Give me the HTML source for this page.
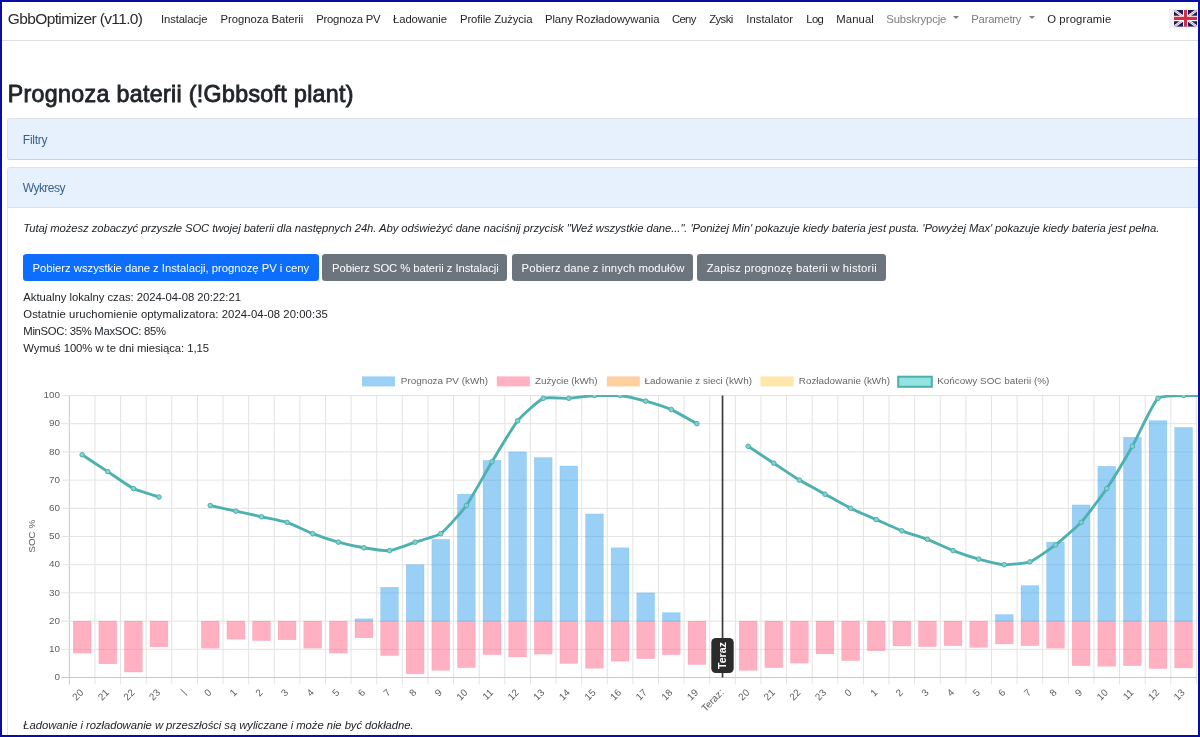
<!DOCTYPE html>
<html lang="pl"><head><meta charset="utf-8"><title>GbbOptimizer - Prognoza baterii</title>
<style>
html,body{margin:0;padding:0;background:#fff}
body{width:1200px;height:737px;position:relative;overflow:hidden;font-family:"Liberation Sans",sans-serif;color:#212529}
#page{position:absolute;left:0;top:0;width:1200px;height:737px;overflow:hidden;will-change:transform;filter:blur(0.3px)}
.t{position:absolute;white-space:nowrap;display:block;margin:0;padding:0;font-weight:400;text-decoration:none}
button{border:0;padding:0;margin:0;font:inherit;text-align:left;cursor:pointer;overflow:visible}
.abs{position:absolute}
#navbar{left:0;top:0;width:1200px;height:40px;background:#fff;border-bottom:1px solid #dedede}
#flagbg{left:1169px;top:9px;width:31px;height:19px;background:#f1f1f1}
.card-h{background:#e7f1fd;border:1px solid #dde2e8;box-sizing:border-box}
#filtry{left:7px;top:118px;width:1200px;height:42px;border-radius:3px;border-bottom-color:#cdd2d8}
#wykresy-h{left:7px;top:166.5px;width:1200px;height:41.5px;border-radius:3px 3px 0 0}
#wykresy-b{left:7px;top:207px;width:1200px;height:600px;border-left:1px solid #e4e7eb;box-sizing:border-box}
.btn{position:absolute;top:254px;height:27.2px;border-radius:3.3px;box-sizing:border-box}
.btn-p{background:#0d6efd}
.btn-s{background:#6c757d}
.caret{position:absolute;width:0;height:0;border-left:3.2px solid transparent;border-right:3.2px solid transparent;border-top:3.4px solid #7d7d7d}
#frame{left:0;top:0;width:1200px;height:737px;box-sizing:border-box;border:2px solid #0b0ba6;border-bottom-width:2px;pointer-events:none;z-index:10}
svg{position:absolute;left:0;top:0}
</style></head>
<body>
<div id="page">
<nav class="navbar">
<div class="abs" id="navbar"></div>
<a class="t navbar-brand" id="t0" href="#" style="left:7.80px;top:9px;font-size:15.50px;line-height:19px;color:#2a2a2a;letter-spacing:-0.622px;">GbbOptimizer (v11.0)</a>
<a class="t nav-link" id="t1" href="#" style="left:161.00px;top:12px;font-size:11.30px;line-height:14px;color:#252525;letter-spacing:-0.137px;">Instalacje</a>
<a class="t nav-link" id="t2" href="#" style="left:220.50px;top:12px;font-size:11.30px;line-height:14px;color:#252525;letter-spacing:-0.049px;">Prognoza Baterii</a>
<a class="t nav-link" id="t3" href="#" style="left:316.20px;top:12px;font-size:11.30px;line-height:14px;color:#252525;letter-spacing:-0.228px;">Prognoza PV</a>
<a class="t nav-link" id="t4" href="#" style="left:393.00px;top:12px;font-size:11.30px;line-height:14px;color:#252525;letter-spacing:-0.082px;">Ładowanie</a>
<a class="t nav-link" id="t5" href="#" style="left:460.00px;top:12px;font-size:11.30px;line-height:14px;color:#252525;letter-spacing:-0.114px;">Profile Zużycia</a>
<a class="t nav-link" id="t6" href="#" style="left:545.00px;top:12px;font-size:11.30px;line-height:14px;color:#252525;letter-spacing:-0.088px;">Plany Rozładowywania</a>
<a class="t nav-link" id="t7" href="#" style="left:672.00px;top:12px;font-size:11.30px;line-height:14px;color:#252525;letter-spacing:-0.692px;">Ceny</a>
<a class="t nav-link" id="t8" href="#" style="left:709.20px;top:12px;font-size:11.30px;line-height:14px;color:#252525;letter-spacing:-0.565px;">Zyski</a>
<a class="t nav-link" id="t9" href="#" style="left:746.30px;top:12px;font-size:11.30px;line-height:14px;color:#252525;letter-spacing:0.026px;">Instalator</a>
<a class="t nav-link" id="t10" href="#" style="left:806.30px;top:12px;font-size:11.30px;line-height:14px;color:#252525;letter-spacing:-0.680px;">Log</a>
<a class="t nav-link" id="t11" href="#" style="left:836.30px;top:12px;font-size:11.30px;line-height:14px;color:#252525;letter-spacing:0.087px;">Manual</a>
<a class="t nav-link dropdown-toggle" id="t12" href="#" style="left:886.30px;top:12px;font-size:11.30px;line-height:14px;color:#7d7d7d;letter-spacing:-0.155px;">Subskrypcje</a>
<a class="t nav-link dropdown-toggle" id="t13" href="#" style="left:971.30px;top:12px;font-size:11.30px;line-height:14px;color:#7d7d7d;letter-spacing:-0.239px;">Parametry</a>
<a class="t nav-link" id="t14" href="#" style="left:1047.20px;top:12px;font-size:11.30px;line-height:14px;color:#252525;letter-spacing:0.130px;">O programie</a>
<div class="caret" style="left:953.2px;top:15.9px"></div>
<div class="caret" style="left:1028.7px;top:15.9px"></div>
<div class="abs" id="flagbg"></div>
<svg class="abs" role="img" aria-label="English" style="left:1174.2px;top:10.4px" width="23" height="16.8" viewBox="0 0 60 40" preserveAspectRatio="none">
<clipPath id="fc"><rect width="60" height="40" rx="5"/></clipPath>
<g clip-path="url(#fc)">
<rect width="60" height="40" fill="#1a1a5e"/>
<path d="M0,0 L60,40 M60,0 L0,40" stroke="#fff" stroke-width="6"/>
<path d="M0,0 L60,40 M60,0 L0,40" stroke="#d23a4e" stroke-width="1.6"/>
<path d="M30,0 V40 M0,20 H60" stroke="#fff" stroke-width="13"/>
<path d="M30,0 V40 M0,20 H60" stroke="#d12f45" stroke-width="8"/>
</g></svg>
</nav>
<main>
<h3 class="t" id="t15" style="left:7.70px;top:80px;font-size:23.20px;line-height:28px;color:#212529;letter-spacing:0.337px;-webkit-text-stroke:0.85px #212529;">Prognoza baterii (!Gbbsoft plant)</h3>
<section class="card">
<div class="abs card-h" id="filtry"></div>
<span class="t card-title" id="t16" style="left:22.80px;top:132px;font-size:12.00px;line-height:16px;color:#36608f;letter-spacing:-0.240px;">Filtry</span>
</section>
<section class="card">
<div class="abs card-h" id="wykresy-h"></div>
<span class="t card-title" id="t17" style="left:22.80px;top:180px;font-size:12.00px;line-height:16px;color:#36608f;letter-spacing:-0.548px;">Wykresy</span>
<div class="abs" id="wykresy-b"></div>
<p class="t" id="t18" style="left:23.30px;top:221px;font-size:11.30px;line-height:14px;color:#212529;font-style:italic;letter-spacing:-0.085px;">Tutaj możesz zobaczyć przyszłe SOC twojej baterii dla następnych 24h. Aby odświeżyć dane naciśnij przycisk "Weź wszystkie dane...". 'Poniżej Min' pokazuje kiedy bateria jest pusta. 'Powyżej Max' pokazuje kiedy bateria jest pełna.</p>
<div class="btn-row">
<button type="button" class="btn btn-p" style="left:23.1px;width:295.6px"><span class="t" id="t19" style="left:9.50px;top:7px;font-size:11.30px;line-height:14px;color:#fff;letter-spacing:-0.029px;">Pobierz wszystkie dane z Instalacji, prognozę PV i ceny</span></button>
<button type="button" class="btn btn-s" style="left:322.4px;width:185px"><span class="t" id="t20" style="left:9.60px;top:7px;font-size:11.30px;line-height:14px;color:#fff;letter-spacing:-0.064px;">Pobierz SOC % baterii z Instalacji</span></button>
<button type="button" class="btn btn-s" style="left:511.6px;width:181.7px"><span class="t" id="t21" style="left:10.00px;top:7px;font-size:11.30px;line-height:14px;color:#fff;letter-spacing:0.114px;">Pobierz dane z innych modułów</span></button>
<button type="button" class="btn btn-s" style="left:697.3px;width:188.7px"><span class="t" id="t22" style="left:9.40px;top:7px;font-size:11.30px;line-height:14px;color:#fff;letter-spacing:0.166px;">Zapisz prognozę baterii w historii</span></button>
</div>
<div class="info">
<div class="t" id="t23" style="left:23.30px;top:290px;font-size:11.30px;line-height:14px;color:#212529;letter-spacing:-0.036px;">Aktualny lokalny czas: 2024-04-08 20:22:21</div>
<div class="t" id="t24" style="left:23.30px;top:307px;font-size:11.30px;line-height:14px;color:#212529;letter-spacing:0.066px;">Ostatnie uruchomienie optymalizatora: 2024-04-08 20:00:35</div>
<div class="t" id="t25" style="left:23.30px;top:324px;font-size:11.30px;line-height:14px;color:#212529;letter-spacing:-0.306px;">MinSOC: 35% MaxSOC: 85%</div>
<div class="t" id="t26" style="left:23.30px;top:341px;font-size:11.30px;line-height:14px;color:#212529;letter-spacing:-0.056px;">Wymuś 100% w te dni miesiąca: 1,15</div>
</div>
<div class="chart">
<span class="t legend-label" id="t28" style="left:400.80px;top:374px;font-size:9.90px;line-height:13px;color:#666;letter-spacing:-0.004px;">Prognoza PV (kWh)</span>
<span class="t legend-label" id="t29" style="left:535.00px;top:374px;font-size:9.90px;line-height:13px;color:#666;letter-spacing:-0.049px;">Zużycie (kWh)</span>
<span class="t legend-label" id="t30" style="left:644.60px;top:374px;font-size:9.90px;line-height:13px;color:#666;letter-spacing:0.017px;">Ładowanie z sieci (kWh)</span>
<span class="t legend-label" id="t31" style="left:798.80px;top:374px;font-size:9.90px;line-height:13px;color:#666;letter-spacing:0.005px;">Rozładowanie (kWh)</span>
<span class="t legend-label" id="t32" style="left:937.20px;top:374px;font-size:9.90px;line-height:13px;color:#666;letter-spacing:0.007px;">Końcowy SOC baterii (%)</span>
<svg width="1200" height="737" viewBox="0 0 1200 737">
<line x1="69.35" y1="395.50" x2="69.35" y2="684.50" stroke="#c9c9c9" stroke-width="1"/>
<line x1="94.96" y1="395.50" x2="94.96" y2="684.50" stroke="#e3e3e3" stroke-width="1"/>
<line x1="120.58" y1="395.50" x2="120.58" y2="684.50" stroke="#e3e3e3" stroke-width="1"/>
<line x1="146.19" y1="395.50" x2="146.19" y2="684.50" stroke="#e3e3e3" stroke-width="1"/>
<line x1="171.81" y1="395.50" x2="171.81" y2="684.50" stroke="#e3e3e3" stroke-width="1"/>
<line x1="197.42" y1="395.50" x2="197.42" y2="684.50" stroke="#e3e3e3" stroke-width="1"/>
<line x1="223.04" y1="395.50" x2="223.04" y2="684.50" stroke="#e3e3e3" stroke-width="1"/>
<line x1="248.65" y1="395.50" x2="248.65" y2="684.50" stroke="#e3e3e3" stroke-width="1"/>
<line x1="274.27" y1="395.50" x2="274.27" y2="684.50" stroke="#e3e3e3" stroke-width="1"/>
<line x1="299.88" y1="395.50" x2="299.88" y2="684.50" stroke="#e3e3e3" stroke-width="1"/>
<line x1="325.50" y1="395.50" x2="325.50" y2="684.50" stroke="#e3e3e3" stroke-width="1"/>
<line x1="351.11" y1="395.50" x2="351.11" y2="684.50" stroke="#e3e3e3" stroke-width="1"/>
<line x1="376.73" y1="395.50" x2="376.73" y2="684.50" stroke="#e3e3e3" stroke-width="1"/>
<line x1="402.34" y1="395.50" x2="402.34" y2="684.50" stroke="#e3e3e3" stroke-width="1"/>
<line x1="427.96" y1="395.50" x2="427.96" y2="684.50" stroke="#e3e3e3" stroke-width="1"/>
<line x1="453.57" y1="395.50" x2="453.57" y2="684.50" stroke="#e3e3e3" stroke-width="1"/>
<line x1="479.19" y1="395.50" x2="479.19" y2="684.50" stroke="#e3e3e3" stroke-width="1"/>
<line x1="504.80" y1="395.50" x2="504.80" y2="684.50" stroke="#e3e3e3" stroke-width="1"/>
<line x1="530.42" y1="395.50" x2="530.42" y2="684.50" stroke="#e3e3e3" stroke-width="1"/>
<line x1="556.03" y1="395.50" x2="556.03" y2="684.50" stroke="#e3e3e3" stroke-width="1"/>
<line x1="581.65" y1="395.50" x2="581.65" y2="684.50" stroke="#e3e3e3" stroke-width="1"/>
<line x1="607.26" y1="395.50" x2="607.26" y2="684.50" stroke="#e3e3e3" stroke-width="1"/>
<line x1="632.88" y1="395.50" x2="632.88" y2="684.50" stroke="#e3e3e3" stroke-width="1"/>
<line x1="658.49" y1="395.50" x2="658.49" y2="684.50" stroke="#e3e3e3" stroke-width="1"/>
<line x1="684.10" y1="395.50" x2="684.10" y2="684.50" stroke="#e3e3e3" stroke-width="1"/>
<line x1="709.72" y1="395.50" x2="709.72" y2="684.50" stroke="#e3e3e3" stroke-width="1"/>
<line x1="735.33" y1="395.50" x2="735.33" y2="684.50" stroke="#e3e3e3" stroke-width="1"/>
<line x1="760.95" y1="395.50" x2="760.95" y2="684.50" stroke="#e3e3e3" stroke-width="1"/>
<line x1="786.56" y1="395.50" x2="786.56" y2="684.50" stroke="#e3e3e3" stroke-width="1"/>
<line x1="812.18" y1="395.50" x2="812.18" y2="684.50" stroke="#e3e3e3" stroke-width="1"/>
<line x1="837.79" y1="395.50" x2="837.79" y2="684.50" stroke="#e3e3e3" stroke-width="1"/>
<line x1="863.41" y1="395.50" x2="863.41" y2="684.50" stroke="#e3e3e3" stroke-width="1"/>
<line x1="889.02" y1="395.50" x2="889.02" y2="684.50" stroke="#e3e3e3" stroke-width="1"/>
<line x1="914.64" y1="395.50" x2="914.64" y2="684.50" stroke="#e3e3e3" stroke-width="1"/>
<line x1="940.25" y1="395.50" x2="940.25" y2="684.50" stroke="#e3e3e3" stroke-width="1"/>
<line x1="965.87" y1="395.50" x2="965.87" y2="684.50" stroke="#e3e3e3" stroke-width="1"/>
<line x1="991.48" y1="395.50" x2="991.48" y2="684.50" stroke="#e3e3e3" stroke-width="1"/>
<line x1="1017.10" y1="395.50" x2="1017.10" y2="684.50" stroke="#e3e3e3" stroke-width="1"/>
<line x1="1042.71" y1="395.50" x2="1042.71" y2="684.50" stroke="#e3e3e3" stroke-width="1"/>
<line x1="1068.33" y1="395.50" x2="1068.33" y2="684.50" stroke="#e3e3e3" stroke-width="1"/>
<line x1="1093.94" y1="395.50" x2="1093.94" y2="684.50" stroke="#e3e3e3" stroke-width="1"/>
<line x1="1119.56" y1="395.50" x2="1119.56" y2="684.50" stroke="#e3e3e3" stroke-width="1"/>
<line x1="1145.17" y1="395.50" x2="1145.17" y2="684.50" stroke="#e3e3e3" stroke-width="1"/>
<line x1="1170.79" y1="395.50" x2="1170.79" y2="684.50" stroke="#e3e3e3" stroke-width="1"/>
<line x1="1196.40" y1="395.50" x2="1196.40" y2="684.50" stroke="#e3e3e3" stroke-width="1"/>
<line x1="61.75" y1="677.50" x2="1196.90" y2="677.50" stroke="#c9c9c9" stroke-width="1"/>
<line x1="61.75" y1="649.30" x2="1196.90" y2="649.30" stroke="#e3e3e3" stroke-width="1"/>
<line x1="61.75" y1="621.10" x2="1196.90" y2="621.10" stroke="#e3e3e3" stroke-width="1"/>
<line x1="61.75" y1="592.90" x2="1196.90" y2="592.90" stroke="#e3e3e3" stroke-width="1"/>
<line x1="61.75" y1="564.70" x2="1196.90" y2="564.70" stroke="#e3e3e3" stroke-width="1"/>
<line x1="61.75" y1="536.50" x2="1196.90" y2="536.50" stroke="#e3e3e3" stroke-width="1"/>
<line x1="61.75" y1="508.30" x2="1196.90" y2="508.30" stroke="#e3e3e3" stroke-width="1"/>
<line x1="61.75" y1="480.10" x2="1196.90" y2="480.10" stroke="#e3e3e3" stroke-width="1"/>
<line x1="61.75" y1="451.90" x2="1196.90" y2="451.90" stroke="#e3e3e3" stroke-width="1"/>
<line x1="61.75" y1="423.70" x2="1196.90" y2="423.70" stroke="#e3e3e3" stroke-width="1"/>
<line x1="61.75" y1="395.50" x2="1196.90" y2="395.50" stroke="#e3e3e3" stroke-width="1"/>
<rect x="73.26" y="621.10" width="17.80" height="31.98" fill="rgba(255,99,132,0.5)" stroke="rgba(255,99,132,0.35)" stroke-width="0.5"/>
<rect x="98.87" y="621.10" width="17.80" height="42.69" fill="rgba(255,99,132,0.5)" stroke="rgba(255,99,132,0.35)" stroke-width="0.5"/>
<rect x="124.49" y="621.10" width="17.80" height="50.93" fill="rgba(255,99,132,0.5)" stroke="rgba(255,99,132,0.35)" stroke-width="0.5"/>
<rect x="150.10" y="621.10" width="17.80" height="25.75" fill="rgba(255,99,132,0.5)" stroke="rgba(255,99,132,0.35)" stroke-width="0.5"/>
<rect x="201.33" y="621.10" width="17.80" height="27.07" fill="rgba(255,99,132,0.5)" stroke="rgba(255,99,132,0.35)" stroke-width="0.5"/>
<rect x="226.95" y="621.10" width="17.80" height="18.05" fill="rgba(255,99,132,0.5)" stroke="rgba(255,99,132,0.35)" stroke-width="0.5"/>
<rect x="252.56" y="621.10" width="17.80" height="19.46" fill="rgba(255,99,132,0.5)" stroke="rgba(255,99,132,0.35)" stroke-width="0.5"/>
<rect x="278.18" y="621.10" width="17.80" height="18.61" fill="rgba(255,99,132,0.5)" stroke="rgba(255,99,132,0.35)" stroke-width="0.5"/>
<rect x="303.79" y="621.10" width="17.80" height="27.07" fill="rgba(255,99,132,0.5)" stroke="rgba(255,99,132,0.35)" stroke-width="0.5"/>
<rect x="329.41" y="621.10" width="17.80" height="31.98" fill="rgba(255,99,132,0.5)" stroke="rgba(255,99,132,0.35)" stroke-width="0.5"/>
<rect x="355.02" y="618.84" width="17.80" height="2.26" fill="rgba(54,162,235,0.5)" stroke="rgba(54,162,235,0.35)" stroke-width="0.5"/>
<rect x="355.02" y="621.10" width="17.80" height="16.64" fill="rgba(255,99,132,0.5)" stroke="rgba(255,99,132,0.35)" stroke-width="0.5"/>
<rect x="380.63" y="587.26" width="17.80" height="33.84" fill="rgba(54,162,235,0.5)" stroke="rgba(54,162,235,0.35)" stroke-width="0.5"/>
<rect x="380.63" y="621.10" width="17.80" height="34.40" fill="rgba(255,99,132,0.5)" stroke="rgba(255,99,132,0.35)" stroke-width="0.5"/>
<rect x="406.25" y="564.70" width="17.80" height="56.40" fill="rgba(54,162,235,0.5)" stroke="rgba(54,162,235,0.35)" stroke-width="0.5"/>
<rect x="406.25" y="621.10" width="17.80" height="52.73" fill="rgba(255,99,132,0.5)" stroke="rgba(255,99,132,0.35)" stroke-width="0.5"/>
<rect x="431.86" y="539.32" width="17.80" height="81.78" fill="rgba(54,162,235,0.5)" stroke="rgba(54,162,235,0.35)" stroke-width="0.5"/>
<rect x="431.86" y="621.10" width="17.80" height="49.18" fill="rgba(255,99,132,0.5)" stroke="rgba(255,99,132,0.35)" stroke-width="0.5"/>
<rect x="457.48" y="494.20" width="17.80" height="126.90" fill="rgba(54,162,235,0.5)" stroke="rgba(54,162,235,0.35)" stroke-width="0.5"/>
<rect x="457.48" y="621.10" width="17.80" height="46.53" fill="rgba(255,99,132,0.5)" stroke="rgba(255,99,132,0.35)" stroke-width="0.5"/>
<rect x="483.09" y="460.36" width="17.80" height="160.74" fill="rgba(54,162,235,0.5)" stroke="rgba(54,162,235,0.35)" stroke-width="0.5"/>
<rect x="483.09" y="621.10" width="17.80" height="33.56" fill="rgba(255,99,132,0.5)" stroke="rgba(255,99,132,0.35)" stroke-width="0.5"/>
<rect x="508.71" y="451.90" width="17.80" height="169.20" fill="rgba(54,162,235,0.5)" stroke="rgba(54,162,235,0.35)" stroke-width="0.5"/>
<rect x="508.71" y="621.10" width="17.80" height="35.81" fill="rgba(255,99,132,0.5)" stroke="rgba(255,99,132,0.35)" stroke-width="0.5"/>
<rect x="534.32" y="457.54" width="17.80" height="163.56" fill="rgba(54,162,235,0.5)" stroke="rgba(54,162,235,0.35)" stroke-width="0.5"/>
<rect x="534.32" y="621.10" width="17.80" height="32.99" fill="rgba(255,99,132,0.5)" stroke="rgba(255,99,132,0.35)" stroke-width="0.5"/>
<rect x="559.94" y="466.00" width="17.80" height="155.10" fill="rgba(54,162,235,0.5)" stroke="rgba(54,162,235,0.35)" stroke-width="0.5"/>
<rect x="559.94" y="621.10" width="17.80" height="42.30" fill="rgba(255,99,132,0.5)" stroke="rgba(255,99,132,0.35)" stroke-width="0.5"/>
<rect x="585.55" y="513.94" width="17.80" height="107.16" fill="rgba(54,162,235,0.5)" stroke="rgba(54,162,235,0.35)" stroke-width="0.5"/>
<rect x="585.55" y="621.10" width="17.80" height="47.09" fill="rgba(255,99,132,0.5)" stroke="rgba(255,99,132,0.35)" stroke-width="0.5"/>
<rect x="611.17" y="547.78" width="17.80" height="73.32" fill="rgba(54,162,235,0.5)" stroke="rgba(54,162,235,0.35)" stroke-width="0.5"/>
<rect x="611.17" y="621.10" width="17.80" height="40.04" fill="rgba(255,99,132,0.5)" stroke="rgba(255,99,132,0.35)" stroke-width="0.5"/>
<rect x="636.78" y="592.90" width="17.80" height="28.20" fill="rgba(54,162,235,0.5)" stroke="rgba(54,162,235,0.35)" stroke-width="0.5"/>
<rect x="636.78" y="621.10" width="17.80" height="37.51" fill="rgba(255,99,132,0.5)" stroke="rgba(255,99,132,0.35)" stroke-width="0.5"/>
<rect x="662.40" y="612.64" width="17.80" height="8.46" fill="rgba(54,162,235,0.5)" stroke="rgba(54,162,235,0.35)" stroke-width="0.5"/>
<rect x="662.40" y="621.10" width="17.80" height="33.56" fill="rgba(255,99,132,0.5)" stroke="rgba(255,99,132,0.35)" stroke-width="0.5"/>
<rect x="688.01" y="621.10" width="17.80" height="43.43" fill="rgba(255,99,132,0.5)" stroke="rgba(255,99,132,0.35)" stroke-width="0.5"/>
<rect x="739.24" y="621.10" width="17.80" height="49.18" fill="rgba(255,99,132,0.5)" stroke="rgba(255,99,132,0.35)" stroke-width="0.5"/>
<rect x="764.86" y="621.10" width="17.80" height="46.53" fill="rgba(255,99,132,0.5)" stroke="rgba(255,99,132,0.35)" stroke-width="0.5"/>
<rect x="790.47" y="621.10" width="17.80" height="42.02" fill="rgba(255,99,132,0.5)" stroke="rgba(255,99,132,0.35)" stroke-width="0.5"/>
<rect x="816.09" y="621.10" width="17.80" height="32.71" fill="rgba(255,99,132,0.5)" stroke="rgba(255,99,132,0.35)" stroke-width="0.5"/>
<rect x="841.70" y="621.10" width="17.80" height="39.48" fill="rgba(255,99,132,0.5)" stroke="rgba(255,99,132,0.35)" stroke-width="0.5"/>
<rect x="867.32" y="621.10" width="17.80" height="29.61" fill="rgba(255,99,132,0.5)" stroke="rgba(255,99,132,0.35)" stroke-width="0.5"/>
<rect x="892.93" y="621.10" width="17.80" height="24.82" fill="rgba(255,99,132,0.5)" stroke="rgba(255,99,132,0.35)" stroke-width="0.5"/>
<rect x="918.54" y="621.10" width="17.80" height="25.49" fill="rgba(255,99,132,0.5)" stroke="rgba(255,99,132,0.35)" stroke-width="0.5"/>
<rect x="944.16" y="621.10" width="17.80" height="24.53" fill="rgba(255,99,132,0.5)" stroke="rgba(255,99,132,0.35)" stroke-width="0.5"/>
<rect x="969.77" y="621.10" width="17.80" height="26.23" fill="rgba(255,99,132,0.5)" stroke="rgba(255,99,132,0.35)" stroke-width="0.5"/>
<rect x="995.39" y="614.61" width="17.80" height="6.49" fill="rgba(54,162,235,0.5)" stroke="rgba(54,162,235,0.35)" stroke-width="0.5"/>
<rect x="995.39" y="621.10" width="17.80" height="22.84" fill="rgba(255,99,132,0.5)" stroke="rgba(255,99,132,0.35)" stroke-width="0.5"/>
<rect x="1021.00" y="585.57" width="17.80" height="35.53" fill="rgba(54,162,235,0.5)" stroke="rgba(54,162,235,0.35)" stroke-width="0.5"/>
<rect x="1021.00" y="621.10" width="17.80" height="24.53" fill="rgba(255,99,132,0.5)" stroke="rgba(255,99,132,0.35)" stroke-width="0.5"/>
<rect x="1046.62" y="542.14" width="17.80" height="78.96" fill="rgba(54,162,235,0.5)" stroke="rgba(54,162,235,0.35)" stroke-width="0.5"/>
<rect x="1046.62" y="621.10" width="17.80" height="27.07" fill="rgba(255,99,132,0.5)" stroke="rgba(255,99,132,0.35)" stroke-width="0.5"/>
<rect x="1072.23" y="504.92" width="17.80" height="116.18" fill="rgba(54,162,235,0.5)" stroke="rgba(54,162,235,0.35)" stroke-width="0.5"/>
<rect x="1072.23" y="621.10" width="17.80" height="44.56" fill="rgba(255,99,132,0.5)" stroke="rgba(255,99,132,0.35)" stroke-width="0.5"/>
<rect x="1097.85" y="466.28" width="17.80" height="154.82" fill="rgba(54,162,235,0.5)" stroke="rgba(54,162,235,0.35)" stroke-width="0.5"/>
<rect x="1097.85" y="621.10" width="17.80" height="45.12" fill="rgba(255,99,132,0.5)" stroke="rgba(255,99,132,0.35)" stroke-width="0.5"/>
<rect x="1123.46" y="437.24" width="17.80" height="183.86" fill="rgba(54,162,235,0.5)" stroke="rgba(54,162,235,0.35)" stroke-width="0.5"/>
<rect x="1123.46" y="621.10" width="17.80" height="44.56" fill="rgba(255,99,132,0.5)" stroke="rgba(255,99,132,0.35)" stroke-width="0.5"/>
<rect x="1149.08" y="420.60" width="17.80" height="200.50" fill="rgba(54,162,235,0.5)" stroke="rgba(54,162,235,0.35)" stroke-width="0.5"/>
<rect x="1149.08" y="621.10" width="17.80" height="47.38" fill="rgba(255,99,132,0.5)" stroke="rgba(255,99,132,0.35)" stroke-width="0.5"/>
<rect x="1174.69" y="427.37" width="17.80" height="193.73" fill="rgba(54,162,235,0.5)" stroke="rgba(54,162,235,0.35)" stroke-width="0.5"/>
<rect x="1174.69" y="621.10" width="17.80" height="46.81" fill="rgba(255,99,132,0.5)" stroke="rgba(255,99,132,0.35)" stroke-width="0.5"/>
<line x1="722.53" y1="395.50" x2="722.53" y2="677.50" stroke="#3c3c3c" stroke-width="1.7"/>
<clipPath id="cc"><rect x="67.35" y="394.90" width="1140" height="300"/></clipPath><g clip-path="url(#cc)">
<path fill="none" stroke="#4db1b0" stroke-width="2.9" stroke-linejoin="round" stroke-linecap="butt" d="M82.16,454.72 C86.26,457.43 103.67,468.93 107.77,471.64 C111.87,474.35 129.02,486.40 133.39,488.56 C137.22,490.46 154.90,495.67 159.00,497.02"/>
<path fill="none" stroke="#4db1b0" stroke-width="2.9" stroke-linejoin="round" stroke-linecap="butt" d="M210.23,505.48 C214.33,506.38 231.75,510.22 235.85,511.12 C239.94,512.02 257.36,515.86 261.46,516.76 C265.56,517.66 283.11,521.09 287.08,522.40 C291.31,523.80 308.52,532.07 312.69,533.68 C316.71,535.23 334.15,541.00 338.31,542.14 C342.35,543.25 359.79,547.10 363.92,547.78 C367.98,548.45 385.53,551.04 389.53,550.60 C393.73,550.14 411.05,543.49 415.15,542.14 C419.25,540.79 437.37,536.11 440.76,533.68 C445.56,530.25 462.86,510.42 466.38,505.48 C471.06,498.91 487.80,468.70 491.99,461.77 C495.99,455.17 512.81,426.83 517.61,420.88 C521.00,416.67 538.54,400.38 543.22,398.32 C546.74,396.77 564.75,398.54 568.84,398.32 C572.95,398.09 590.34,395.73 594.45,395.50 C598.54,395.50 616.02,395.50 620.07,395.50 C624.21,395.96 641.64,400.03 645.68,401.14 C649.84,402.28 667.36,407.87 671.30,409.60 C675.56,411.48 692.81,421.44 696.91,423.70"/>
<path fill="none" stroke="#4db1b0" stroke-width="2.9" stroke-linejoin="round" stroke-linecap="butt" d="M748.14,446.26 C752.24,448.97 769.66,460.47 773.76,463.18 C777.85,465.89 795.17,477.56 799.37,480.10 C803.37,482.52 820.89,491.94 824.99,494.20 C829.08,496.46 846.41,506.23 850.60,508.30 C854.61,510.29 872.12,517.78 876.22,519.58 C880.31,521.38 897.66,529.25 901.83,530.86 C905.85,532.41 923.42,537.77 927.44,539.32 C931.62,540.93 948.89,548.99 953.06,550.60 C957.08,552.15 974.52,557.92 978.67,559.06 C982.72,560.17 1000.15,564.47 1004.29,564.70 C1008.35,564.92 1026.16,563.32 1029.90,561.88 C1034.36,560.16 1051.64,547.95 1055.52,544.96 C1059.83,541.63 1077.48,526.42 1081.13,522.40 C1085.68,517.40 1102.96,494.19 1106.75,488.56 C1111.16,482.00 1128.46,453.14 1132.36,446.26 C1136.66,438.70 1152.42,403.83 1157.98,398.32 C1160.61,395.71 1179.48,395.78 1183.59,395.50 C1186.21,395.50 1197.37,395.50 1200.00,395.50"/>
<circle cx="82.16" cy="454.72" r="2.3" fill="#86d0ce" stroke="#4db1b0" stroke-width="1"/>
<circle cx="107.77" cy="471.64" r="2.3" fill="#86d0ce" stroke="#4db1b0" stroke-width="1"/>
<circle cx="133.39" cy="488.56" r="2.3" fill="#86d0ce" stroke="#4db1b0" stroke-width="1"/>
<circle cx="159.00" cy="497.02" r="2.3" fill="#86d0ce" stroke="#4db1b0" stroke-width="1"/>
<circle cx="210.23" cy="505.48" r="2.3" fill="#86d0ce" stroke="#4db1b0" stroke-width="1"/>
<circle cx="235.85" cy="511.12" r="2.3" fill="#86d0ce" stroke="#4db1b0" stroke-width="1"/>
<circle cx="261.46" cy="516.76" r="2.3" fill="#86d0ce" stroke="#4db1b0" stroke-width="1"/>
<circle cx="287.08" cy="522.40" r="2.3" fill="#86d0ce" stroke="#4db1b0" stroke-width="1"/>
<circle cx="312.69" cy="533.68" r="2.3" fill="#86d0ce" stroke="#4db1b0" stroke-width="1"/>
<circle cx="338.31" cy="542.14" r="2.3" fill="#86d0ce" stroke="#4db1b0" stroke-width="1"/>
<circle cx="363.92" cy="547.78" r="2.3" fill="#86d0ce" stroke="#4db1b0" stroke-width="1"/>
<circle cx="389.53" cy="550.60" r="2.3" fill="#86d0ce" stroke="#4db1b0" stroke-width="1"/>
<circle cx="415.15" cy="542.14" r="2.3" fill="#86d0ce" stroke="#4db1b0" stroke-width="1"/>
<circle cx="440.76" cy="533.68" r="2.3" fill="#86d0ce" stroke="#4db1b0" stroke-width="1"/>
<circle cx="466.38" cy="505.48" r="2.3" fill="#86d0ce" stroke="#4db1b0" stroke-width="1"/>
<circle cx="491.99" cy="461.77" r="2.3" fill="#86d0ce" stroke="#4db1b0" stroke-width="1"/>
<circle cx="517.61" cy="420.88" r="2.3" fill="#86d0ce" stroke="#4db1b0" stroke-width="1"/>
<circle cx="543.22" cy="398.32" r="2.3" fill="#86d0ce" stroke="#4db1b0" stroke-width="1"/>
<circle cx="568.84" cy="398.32" r="2.3" fill="#86d0ce" stroke="#4db1b0" stroke-width="1"/>
<circle cx="594.45" cy="395.50" r="2.3" fill="#86d0ce" stroke="#4db1b0" stroke-width="1"/>
<circle cx="620.07" cy="395.50" r="2.3" fill="#86d0ce" stroke="#4db1b0" stroke-width="1"/>
<circle cx="645.68" cy="401.14" r="2.3" fill="#86d0ce" stroke="#4db1b0" stroke-width="1"/>
<circle cx="671.30" cy="409.60" r="2.3" fill="#86d0ce" stroke="#4db1b0" stroke-width="1"/>
<circle cx="696.91" cy="423.70" r="2.3" fill="#86d0ce" stroke="#4db1b0" stroke-width="1"/>
<circle cx="748.14" cy="446.26" r="2.3" fill="#86d0ce" stroke="#4db1b0" stroke-width="1"/>
<circle cx="773.76" cy="463.18" r="2.3" fill="#86d0ce" stroke="#4db1b0" stroke-width="1"/>
<circle cx="799.37" cy="480.10" r="2.3" fill="#86d0ce" stroke="#4db1b0" stroke-width="1"/>
<circle cx="824.99" cy="494.20" r="2.3" fill="#86d0ce" stroke="#4db1b0" stroke-width="1"/>
<circle cx="850.60" cy="508.30" r="2.3" fill="#86d0ce" stroke="#4db1b0" stroke-width="1"/>
<circle cx="876.22" cy="519.58" r="2.3" fill="#86d0ce" stroke="#4db1b0" stroke-width="1"/>
<circle cx="901.83" cy="530.86" r="2.3" fill="#86d0ce" stroke="#4db1b0" stroke-width="1"/>
<circle cx="927.44" cy="539.32" r="2.3" fill="#86d0ce" stroke="#4db1b0" stroke-width="1"/>
<circle cx="953.06" cy="550.60" r="2.3" fill="#86d0ce" stroke="#4db1b0" stroke-width="1"/>
<circle cx="978.67" cy="559.06" r="2.3" fill="#86d0ce" stroke="#4db1b0" stroke-width="1"/>
<circle cx="1004.29" cy="564.70" r="2.3" fill="#86d0ce" stroke="#4db1b0" stroke-width="1"/>
<circle cx="1029.90" cy="561.88" r="2.3" fill="#86d0ce" stroke="#4db1b0" stroke-width="1"/>
<circle cx="1055.52" cy="544.96" r="2.3" fill="#86d0ce" stroke="#4db1b0" stroke-width="1"/>
<circle cx="1081.13" cy="522.40" r="2.3" fill="#86d0ce" stroke="#4db1b0" stroke-width="1"/>
<circle cx="1106.75" cy="488.56" r="2.3" fill="#86d0ce" stroke="#4db1b0" stroke-width="1"/>
<circle cx="1132.36" cy="446.26" r="2.3" fill="#86d0ce" stroke="#4db1b0" stroke-width="1"/>
<circle cx="1157.98" cy="398.32" r="2.3" fill="#86d0ce" stroke="#4db1b0" stroke-width="1"/>
<circle cx="1183.59" cy="395.50" r="2.3" fill="#86d0ce" stroke="#4db1b0" stroke-width="1"/>
</g>
<rect x="711.3" y="638" width="22.4" height="35" rx="4.5" fill="#2b2b2b"/>
<text transform="translate(726.3,655.6) rotate(-90)" text-anchor="middle" font-family="Liberation Sans, sans-serif" font-size="10.6" font-weight="700" fill="#fff">Teraz</text>
<text x="59.9" y="680.10" text-anchor="end" font-family="Liberation Sans, sans-serif" font-size="9.9" fill="#5e5e5e">0</text>
<text x="59.9" y="651.90" text-anchor="end" font-family="Liberation Sans, sans-serif" font-size="9.9" fill="#5e5e5e">10</text>
<text x="59.9" y="623.70" text-anchor="end" font-family="Liberation Sans, sans-serif" font-size="9.9" fill="#5e5e5e">20</text>
<text x="59.9" y="595.50" text-anchor="end" font-family="Liberation Sans, sans-serif" font-size="9.9" fill="#5e5e5e">30</text>
<text x="59.9" y="567.30" text-anchor="end" font-family="Liberation Sans, sans-serif" font-size="9.9" fill="#5e5e5e">40</text>
<text x="59.9" y="539.10" text-anchor="end" font-family="Liberation Sans, sans-serif" font-size="9.9" fill="#5e5e5e">50</text>
<text x="59.9" y="510.90" text-anchor="end" font-family="Liberation Sans, sans-serif" font-size="9.9" fill="#5e5e5e">60</text>
<text x="59.9" y="482.70" text-anchor="end" font-family="Liberation Sans, sans-serif" font-size="9.9" fill="#5e5e5e">70</text>
<text x="59.9" y="454.50" text-anchor="end" font-family="Liberation Sans, sans-serif" font-size="9.9" fill="#5e5e5e">80</text>
<text x="59.9" y="426.30" text-anchor="end" font-family="Liberation Sans, sans-serif" font-size="9.9" fill="#5e5e5e">90</text>
<text x="59.9" y="398.10" text-anchor="end" font-family="Liberation Sans, sans-serif" font-size="9.9" fill="#5e5e5e">100</text>
<text transform="translate(34.8,536.2) rotate(-90)" text-anchor="middle" font-family="Liberation Sans, sans-serif" font-size="9.9" fill="#5e5e5e">SOC %</text>
<text transform="translate(81.56,690.70) rotate(-45)" text-anchor="end" font-family="Liberation Sans, sans-serif" font-size="9.9" fill="#5e5e5e" dy="3.5">20</text>
<text transform="translate(107.17,690.70) rotate(-45)" text-anchor="end" font-family="Liberation Sans, sans-serif" font-size="9.9" fill="#5e5e5e" dy="3.5">21</text>
<text transform="translate(132.79,690.70) rotate(-45)" text-anchor="end" font-family="Liberation Sans, sans-serif" font-size="9.9" fill="#5e5e5e" dy="3.5">22</text>
<text transform="translate(158.40,690.70) rotate(-45)" text-anchor="end" font-family="Liberation Sans, sans-serif" font-size="9.9" fill="#5e5e5e" dy="3.5">23</text>
<text transform="translate(184.02,690.70) rotate(-45)" text-anchor="end" font-family="Liberation Sans, sans-serif" font-size="9.9" fill="#5e5e5e" dy="3.5">|</text>
<text transform="translate(209.63,690.70) rotate(-45)" text-anchor="end" font-family="Liberation Sans, sans-serif" font-size="9.9" fill="#5e5e5e" dy="3.5">0</text>
<text transform="translate(235.25,690.70) rotate(-45)" text-anchor="end" font-family="Liberation Sans, sans-serif" font-size="9.9" fill="#5e5e5e" dy="3.5">1</text>
<text transform="translate(260.86,690.70) rotate(-45)" text-anchor="end" font-family="Liberation Sans, sans-serif" font-size="9.9" fill="#5e5e5e" dy="3.5">2</text>
<text transform="translate(286.48,690.70) rotate(-45)" text-anchor="end" font-family="Liberation Sans, sans-serif" font-size="9.9" fill="#5e5e5e" dy="3.5">3</text>
<text transform="translate(312.09,690.70) rotate(-45)" text-anchor="end" font-family="Liberation Sans, sans-serif" font-size="9.9" fill="#5e5e5e" dy="3.5">4</text>
<text transform="translate(337.71,690.70) rotate(-45)" text-anchor="end" font-family="Liberation Sans, sans-serif" font-size="9.9" fill="#5e5e5e" dy="3.5">5</text>
<text transform="translate(363.32,690.70) rotate(-45)" text-anchor="end" font-family="Liberation Sans, sans-serif" font-size="9.9" fill="#5e5e5e" dy="3.5">6</text>
<text transform="translate(388.93,690.70) rotate(-45)" text-anchor="end" font-family="Liberation Sans, sans-serif" font-size="9.9" fill="#5e5e5e" dy="3.5">7</text>
<text transform="translate(414.55,690.70) rotate(-45)" text-anchor="end" font-family="Liberation Sans, sans-serif" font-size="9.9" fill="#5e5e5e" dy="3.5">8</text>
<text transform="translate(440.16,690.70) rotate(-45)" text-anchor="end" font-family="Liberation Sans, sans-serif" font-size="9.9" fill="#5e5e5e" dy="3.5">9</text>
<text transform="translate(465.78,690.70) rotate(-45)" text-anchor="end" font-family="Liberation Sans, sans-serif" font-size="9.9" fill="#5e5e5e" dy="3.5">10</text>
<text transform="translate(491.39,690.70) rotate(-45)" text-anchor="end" font-family="Liberation Sans, sans-serif" font-size="9.9" fill="#5e5e5e" dy="3.5">11</text>
<text transform="translate(517.01,690.70) rotate(-45)" text-anchor="end" font-family="Liberation Sans, sans-serif" font-size="9.9" fill="#5e5e5e" dy="3.5">12</text>
<text transform="translate(542.62,690.70) rotate(-45)" text-anchor="end" font-family="Liberation Sans, sans-serif" font-size="9.9" fill="#5e5e5e" dy="3.5">13</text>
<text transform="translate(568.24,690.70) rotate(-45)" text-anchor="end" font-family="Liberation Sans, sans-serif" font-size="9.9" fill="#5e5e5e" dy="3.5">14</text>
<text transform="translate(593.85,690.70) rotate(-45)" text-anchor="end" font-family="Liberation Sans, sans-serif" font-size="9.9" fill="#5e5e5e" dy="3.5">15</text>
<text transform="translate(619.47,690.70) rotate(-45)" text-anchor="end" font-family="Liberation Sans, sans-serif" font-size="9.9" fill="#5e5e5e" dy="3.5">16</text>
<text transform="translate(645.08,690.70) rotate(-45)" text-anchor="end" font-family="Liberation Sans, sans-serif" font-size="9.9" fill="#5e5e5e" dy="3.5">17</text>
<text transform="translate(670.70,690.70) rotate(-45)" text-anchor="end" font-family="Liberation Sans, sans-serif" font-size="9.9" fill="#5e5e5e" dy="3.5">18</text>
<text transform="translate(696.31,690.70) rotate(-45)" text-anchor="end" font-family="Liberation Sans, sans-serif" font-size="9.9" fill="#5e5e5e" dy="3.5">19</text>
<text transform="translate(721.93,690.70) rotate(-45)" text-anchor="end" font-family="Liberation Sans, sans-serif" font-size="9.9" fill="#5e5e5e" dy="3.5">Teraz:</text>
<text transform="translate(747.54,690.70) rotate(-45)" text-anchor="end" font-family="Liberation Sans, sans-serif" font-size="9.9" fill="#5e5e5e" dy="3.5">20</text>
<text transform="translate(773.16,690.70) rotate(-45)" text-anchor="end" font-family="Liberation Sans, sans-serif" font-size="9.9" fill="#5e5e5e" dy="3.5">21</text>
<text transform="translate(798.77,690.70) rotate(-45)" text-anchor="end" font-family="Liberation Sans, sans-serif" font-size="9.9" fill="#5e5e5e" dy="3.5">22</text>
<text transform="translate(824.39,690.70) rotate(-45)" text-anchor="end" font-family="Liberation Sans, sans-serif" font-size="9.9" fill="#5e5e5e" dy="3.5">23</text>
<text transform="translate(850.00,690.70) rotate(-45)" text-anchor="end" font-family="Liberation Sans, sans-serif" font-size="9.9" fill="#5e5e5e" dy="3.5">0</text>
<text transform="translate(875.62,690.70) rotate(-45)" text-anchor="end" font-family="Liberation Sans, sans-serif" font-size="9.9" fill="#5e5e5e" dy="3.5">1</text>
<text transform="translate(901.23,690.70) rotate(-45)" text-anchor="end" font-family="Liberation Sans, sans-serif" font-size="9.9" fill="#5e5e5e" dy="3.5">2</text>
<text transform="translate(926.84,690.70) rotate(-45)" text-anchor="end" font-family="Liberation Sans, sans-serif" font-size="9.9" fill="#5e5e5e" dy="3.5">3</text>
<text transform="translate(952.46,690.70) rotate(-45)" text-anchor="end" font-family="Liberation Sans, sans-serif" font-size="9.9" fill="#5e5e5e" dy="3.5">4</text>
<text transform="translate(978.07,690.70) rotate(-45)" text-anchor="end" font-family="Liberation Sans, sans-serif" font-size="9.9" fill="#5e5e5e" dy="3.5">5</text>
<text transform="translate(1003.69,690.70) rotate(-45)" text-anchor="end" font-family="Liberation Sans, sans-serif" font-size="9.9" fill="#5e5e5e" dy="3.5">6</text>
<text transform="translate(1029.30,690.70) rotate(-45)" text-anchor="end" font-family="Liberation Sans, sans-serif" font-size="9.9" fill="#5e5e5e" dy="3.5">7</text>
<text transform="translate(1054.92,690.70) rotate(-45)" text-anchor="end" font-family="Liberation Sans, sans-serif" font-size="9.9" fill="#5e5e5e" dy="3.5">8</text>
<text transform="translate(1080.53,690.70) rotate(-45)" text-anchor="end" font-family="Liberation Sans, sans-serif" font-size="9.9" fill="#5e5e5e" dy="3.5">9</text>
<text transform="translate(1106.15,690.70) rotate(-45)" text-anchor="end" font-family="Liberation Sans, sans-serif" font-size="9.9" fill="#5e5e5e" dy="3.5">10</text>
<text transform="translate(1131.76,690.70) rotate(-45)" text-anchor="end" font-family="Liberation Sans, sans-serif" font-size="9.9" fill="#5e5e5e" dy="3.5">11</text>
<text transform="translate(1157.38,690.70) rotate(-45)" text-anchor="end" font-family="Liberation Sans, sans-serif" font-size="9.9" fill="#5e5e5e" dy="3.5">12</text>
<text transform="translate(1182.99,690.70) rotate(-45)" text-anchor="end" font-family="Liberation Sans, sans-serif" font-size="9.9" fill="#5e5e5e" dy="3.5">13</text>
<rect x="362.00" y="376.4" width="33" height="10" fill="#9ad0f5"/>
<rect x="496.80" y="376.4" width="33" height="10" fill="#ffb1c1"/>
<rect x="606.80" y="376.4" width="33" height="10" fill="#ffcf9f"/>
<rect x="760.50" y="376.4" width="33" height="10" fill="#ffe6aa"/>
<rect x="898.2" y="376.7" width="33.6" height="10.1" fill="#93e3e0" stroke="#4bb0ac" stroke-width="2"/>
</svg>
</div>
<p class="t" id="t27" style="left:23.30px;top:718px;font-size:11.30px;line-height:14px;color:#212529;font-style:italic;letter-spacing:-0.062px;">Ładowanie i rozładowanie w przeszłości są wyliczane i może nie być dokładne.</p>
</section>
</main>
</div>
<div class="abs" id="frame"></div>
</body></html>
